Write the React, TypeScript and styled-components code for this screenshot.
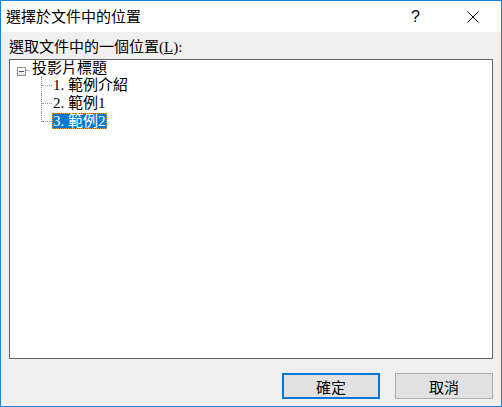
import React from "react";
import styled, { createGlobalStyle } from "styled-components";

const Global = createGlobalStyle`
  html, body { margin: 0; padding: 0; background: #ffffff; }
  * { box-sizing: border-box; }
`;

const CJK = `"Noto Sans CJK TC", "Noto Sans CJK SC", sans-serif`;
const BODY = `"Liberation Serif", "Noto Sans CJK TC", serif`;

const Window = styled.div`
  width: 502px;
  height: 407px;
  border: 1px solid #1883d7;
  background: #f0f0f0;
  display: flex;
  flex-direction: column;
  font-family: ${CJK};
  color: #000;
`;

const TitleBar = styled.div`
  height: 31px;
  background: #ffffff;
  display: flex;
  align-items: center;
  flex-shrink: 0;
`;

const Title = styled.div`
  flex: 1;
  padding-left: 5px;
  font-size: 15px;
  line-height: 18px;
  margin-top: -2px;
  white-space: nowrap;
`;

const CaptionButton = styled.div<{ $w: number }>`
  width: ${(p) => p.$w}px;
  height: 31px;
  display: flex;
  align-items: center;
  justify-content: center;
  font-family: "Liberation Sans", sans-serif;
  font-size: 16px;
`;

const Body = styled.div`
  flex: 1;
  display: flex;
  flex-direction: column;
  padding: 6px 8px 8px 8px;
`;

const Label = styled.div`
  font-family: ${BODY};
  font-size: 15px;
  line-height: 18px;
  height: 18px;
  margin-bottom: 3px;
  white-space: nowrap;
  u { text-decoration: underline; text-underline-offset: 1px; }
`;

const TreeBox = styled.div`
  height: 300px;
  border: 1px solid #646464;
  background: #ffffff;
  padding: 0 0 0 7px;
  font-family: ${BODY};
  font-size: 15px;
`;

const Row = styled.div`
  display: flex;
  align-items: center;
  height: 18px;
  margin-top: -1px;
  & + & { margin-top: 0; }
`;

const Expander = styled.div`
  width: 9px;
  height: 9px;
  border: 1px solid #919191;
  background: linear-gradient(#ffffff, #e6e6e6);
  display: flex;
  align-items: center;
  justify-content: center;
  margin-top: 6px;
  &::after {
    content: "";
    width: 5px;
    height: 1px;
    background: #2c4f8a;
  }
`;

const Stub = styled.div`
  width: 4px;
  margin: 4px 1px 0 0;
  border-top: 1px dotted #9a9a9a;
`;

const Children = styled.div`
  padding-left: 24px;
`;

const Connector = styled.div<{ $last?: boolean }>`
  position: relative;
  width: 11px;
  align-self: stretch;
  &::before {
    content: "";
    position: absolute;
    left: 0;
    top: 0;
    height: ${(p) => (p.$last ? "10px" : "18px")};
    border-left: 1px dotted #9a9a9a;
  }
  &::after {
    content: "";
    position: absolute;
    left: 1px;
    top: 9px;
    width: 10px;
    border-top: 1px dotted #9a9a9a;
  }
`;

const ItemText = styled.span<{ $selected?: boolean }>`
  line-height: 16px;
  height: 16px;
  padding: 0 1px;
  white-space: nowrap;
  background: ${(p) => (p.$selected ? "#0078d7" : "transparent")};
  color: ${(p) => (p.$selected ? "#ffffff" : "#000000")};
  outline: ${(p) => (p.$selected ? "1px dotted #f0a030" : "none")};
  outline-offset: -1px;
`;

const Footer = styled.div`
  display: flex;
  justify-content: flex-end;
  gap: 15px;
  margin-top: 14px;
`;

const Button = styled.div<{ $default?: boolean }>`
  width: 98px;
  height: 26px;
  background: #e1e1e1;
  border: ${(p) => (p.$default ? "2px solid #0078d7" : "1px solid #adadad")};
  display: flex;
  align-items: center;
  justify-content: center;
  font-family: ${CJK};
  font-size: 15px;
`;

const children = [
  { text: "1. 範例介紹" },
  { text: "2. 範例1" },
  { text: "3. 範例2", selected: true },
];

export default function App() {
  return (
    <>
      <Global />
      <Window>
        <TitleBar>
          <Title>選擇於文件中的位置</Title>
          <CaptionButton $w={57}>?</CaptionButton>
          <CaptionButton $w={57}>
            <svg width="12" height="12" viewBox="0 0 12 12">
              <path d="M0.5 0.5 L11.5 11.5 M11.5 0.5 L0.5 11.5" stroke="#000" strokeWidth="1" />
            </svg>
          </CaptionButton>
        </TitleBar>
        <Body>
          <Label>
            選取文件中的一個位置(<u>L</u>):
          </Label>
          <TreeBox>
            <Row>
              <Expander />
              <Stub />
              <ItemText>投影片標題</ItemText>
            </Row>
            <Children>
              {children.map((c, i) => (
                <Row key={c.text}>
                  <Connector $last={i === children.length - 1} />
                  <ItemText $selected={c.selected}>{c.text}</ItemText>
                </Row>
              ))}
            </Children>
          </TreeBox>
          <Footer>
            <Button $default>確定</Button>
            <Button>取消</Button>
          </Footer>
        </Body>
      </Window>
    </>
  );
}
